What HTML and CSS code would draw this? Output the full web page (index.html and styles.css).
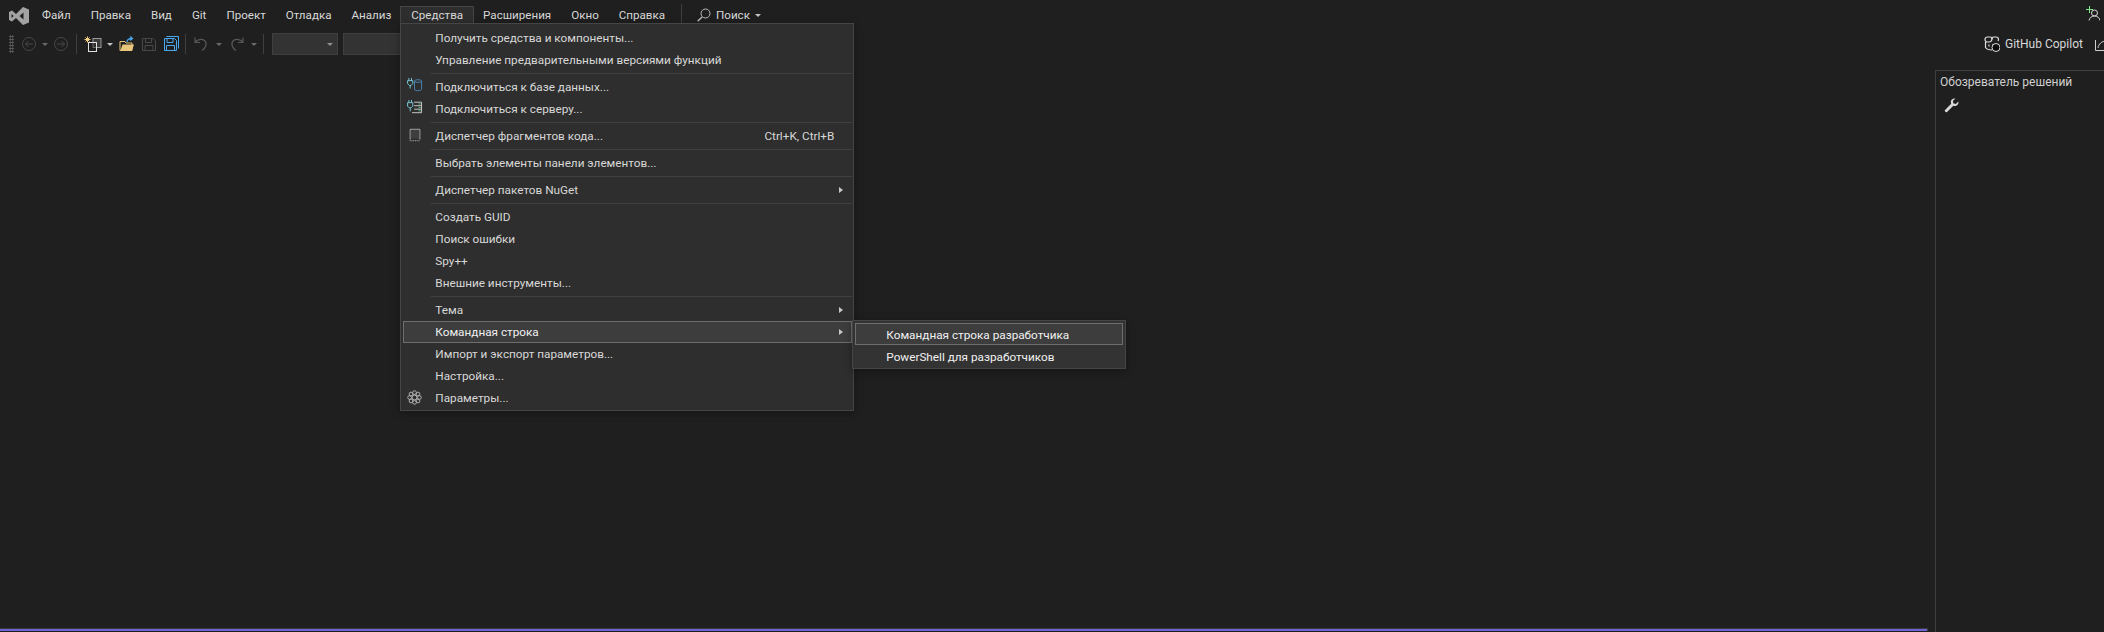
FILE: index.html
```html
<!DOCTYPE html>
<html lang="ru">
<head>
<meta charset="utf-8">
<title>Visual Studio</title>
<link rel="stylesheet" href="styles.css">
</head>
<body>
<div class="app">
  <header class="menubar">
    <svg class="logo" viewBox="0 0 20 18"><path fill-rule="evenodd" fill="#a3a3a3" d="M14 0L20 2.5V15.5L14 18L7 11L3 14.5L0 13V5L3 3.5L7 7ZM2.5 7V11L4.6 9ZM14.5 5.5L10.5 9L14.5 12.5Z"/></svg>
    <nav class="menus">
      <span class="menu-item">Файл</span>
      <span class="menu-item">Правка</span>
      <span class="menu-item">Вид</span>
      <span class="menu-item">Git</span>
      <span class="menu-item">Проект</span>
      <span class="menu-item">Отладка</span>
      <span class="menu-item">Анализ</span>
      <div class="menu-item open">Средства
        <div class="dropdown">
          <div class="row"><span class="label">Получить средства и компоненты...</span></div>
          <div class="row"><span class="label">Управление предварительными версиями функций</span></div>
          <div class="sep"></div>
          <div class="row"><span class="glyph">
            <svg width="16" height="14" viewBox="0 0 18 16" fill="none"><path d="M2 0V3M5 0V3M0.5 3H6.5V6.5L4.5 8.5H2.5L0.5 6.5ZM3.5 8.5V12" stroke="#7fd6e6"/><path d="M8.5 3.5C8.5 1.500 16.500 1.500 16.500 3.500V13C16.500 15 8.500 15 8.500 13ZM8.500 3.500C8.500 5.500 16.500 5.500 16.500 3.500" stroke="#4d8fc2"/></svg>
          </span><span class="label">Подключиться к базе данных...</span></div>
          <div class="row"><span class="glyph">
            <svg width="16" height="14" viewBox="0 0 18 16" fill="none"><path d="M2 0V3M5 0V3M0.5 3H6.500V7L4.500 9H2.500L0.500 7ZM3.500 9V13" stroke="#7fd6e6"/><path d="M8 2.500H16.500V14.500H5.500M8 6.500H16.500M8 10.500H16.500" stroke="#d8d8d8"/><path d="M13 4.500H15.500M13 8.500H15.500M13 12.500H15.500" stroke="#5fd08a"/></svg>
          </span><span class="label">Подключиться к серверу...</span></div>
          <div class="sep"></div>
          <div class="row"><span class="glyph low">
            <svg width="16" height="14" viewBox="0 0 18 16" fill="none"><path d="M3.500 13V1.500H14.500V13" stroke="#d0d0d0"/><rect x="4" y="2" width="10" height="10" fill="#3e3e3e"/><path d="M3 14.500H15" stroke="#d0d0d0" stroke-dasharray="1 1"/></svg>
          </span><span class="label">Диспетчер фрагментов кода...</span><span class="shortcut">Ctrl+K, Ctrl+B</span></div>
          <div class="sep"></div>
          <div class="row"><span class="label">Выбрать элементы панели элементов...</span></div>
          <div class="sep"></div>
          <div class="row"><span class="label">Диспетчер пакетов NuGet</span><span class="arrow"></span></div>
          <div class="sep"></div>
          <div class="row"><span class="label">Создать GUID</span></div>
          <div class="row"><span class="label">Поиск ошибки</span></div>
          <div class="row"><span class="label">Spy++</span></div>
          <div class="row"><span class="label">Внешние инструменты...</span></div>
          <div class="sep"></div>
          <div class="row"><span class="label">Тема</span><span class="arrow"></span></div>
          <div class="row active"><span class="label">Командная строка</span><span class="arrow"></span>
            <div class="submenu">
              <div class="row active sub"><span class="label">Командная строка разработчика</span></div>
              <div class="row sub"><span class="label">PowerShell для разработчиков</span></div>
            </div>
          </div>
          <div class="row"><span class="label">Импорт и экспорт параметров...</span></div>
          <div class="row"><span class="label">Настройка...</span></div>
          <div class="row"><span class="glyph low">
            <svg width="15" height="15" viewBox="0 0 16 16" fill="none" stroke="#b4b4b4"><circle cx="8" cy="8" r="2.500"/><circle cx="8" cy="2.800" r="2"/><circle cx="8" cy="13.200" r="2"/><circle cx="2.800" cy="8" r="2"/><circle cx="13.200" cy="8" r="2"/><circle cx="4.300" cy="4.300" r="2"/><circle cx="11.700" cy="4.300" r="2"/><circle cx="4.300" cy="11.700" r="2"/><circle cx="11.700" cy="11.700" r="2"/></svg>
          </span><span class="label">Параметры...</span></div>
        </div>
      </div>
      <span class="menu-item">Расширения</span>
      <span class="menu-item">Окно</span>
      <span class="menu-item">Справка</span>
    </nav>
    <span class="menu-sep"></span>
    <div class="search">
      <svg width="14" height="14" viewBox="0 0 14 14" fill="none" stroke="#bdbdbd"><circle cx="8.500" cy="5.500" r="4.500"/><path d="M5 9L0.700 13.300" stroke-width="1.400"/></svg>
      <span>Поиск</span>
      <span class="caret light"></span>
    </div>
    <svg class="person" width="14" height="15" viewBox="0 0 14 15" fill="none"><path d="M3.500 0V7M0 3.500H7" stroke="#7ee787"/><circle cx="8.500" cy="7" r="3" stroke="#d8d8d8"/><path d="M3 14.500C3.500 11.500 6 10 8.500 10S13.500 11.500 14 14.500" stroke="#d8d8d8"/></svg>
  </header>

  <div class="toolbar">
    <span class="grip"></span>
    <svg class="tool m7" viewBox="0 0 16 16" fill="none" stroke="#484848"><circle cx="8" cy="8" r="6.500"/><path d="M12 8H4.500M7.500 5L4.500 8L7.500 11"/></svg>
    <span class="caret m5"></span>
    <svg class="tool m5" viewBox="0 0 16 16" fill="none" stroke="#484848"><circle cx="8" cy="8" r="6.500"/><path d="M4 8H11.500M8.500 5L11.500 8L8.500 11"/></svg>
    <span class="tool-sep m7"></span>
    <svg class="tool wide m7" viewBox="0 0 18 16" fill="none"><path d="M3.500 0.500V6.500M0.500 3.500H6.500M1.500 1.500L5.500 5.500M5.500 1.500L1.500 5.500" stroke="#f0d080"/><rect x="9" y="2.500" width="8" height="9" stroke="#9a9a9a" fill="#3a3a3a"/><rect x="4.500" y="6.500" width="8" height="9" stroke="#e2e2e2" fill="#1f1f1f" fill-opacity=".4"/></svg>
    <span class="caret light m5"></span>
    <svg class="tool m6" viewBox="0 0 16 16" fill="none"><path d="M1 14.500V5.500H6L7 7H13V14.500Z" stroke="#e8c77c"/><path d="M1.500 14.500L3.500 8.500H15L13 14.500Z" fill="#e8c77c"/><path d="M8 6C8 3.500 10 2.500 13 2.500M11 0.500L13.500 2.500L11 4.500" stroke="#4aa3e8" stroke-width="1.300"/></svg>
    <svg class="tool m6" viewBox="0 0 16 16" fill="none" stroke="#484848"><path d="M1.500 2.500H12L14.500 5V14.500H1.500Z"/><path d="M4.500 2.500V6.500H10.500V2.500M4 14.500V9.500H12V14.500"/></svg>
    <svg class="tool m6" viewBox="0 0 16 16" fill="none" stroke="#4aa8f0"><path d="M3.500 0.500H15.500V12.500"/><path d="M1.500 2.500H11.500L13.500 4.500V14.500H1.500Z"/><path d="M4 2.500V6.500H10V2.500M3.500 14.500V9.500H11.500V14.500"/></svg>
    <span class="tool-sep m6"></span>
    <svg class="tool m7" viewBox="0 0 16 16" fill="none" stroke="#585858" stroke-width="1.200"><path d="M2 1.500V6.500H7M2 6.500C4 3.500 8.500 2.500 11.500 4.500C14.500 7 13 12 9 14.500"/></svg>
    <span class="caret m7"></span>
    <svg class="tool m7" viewBox="0 0 16 16" fill="none" stroke="#585858" stroke-width="1.200"><path d="M14 1.500V6.500H9M14 6.500C12 3.500 7.500 2.500 4.500 4.500C1.500 7 3 12 7 14.500"/></svg>
    <span class="caret m6"></span>
    <span class="tool-sep m6"></span>
    <div class="combo first"><span class="caret light"></span></div>
    <div class="combo second"></div>
    <div class="copilot">
      <svg width="16" height="16" viewBox="0 0 16 16" fill="none"><path d="M3.500 1H6.500C7.500 1 7.800 2 7.800 3.500C7.800 5 6.500 6 5 6H3.500C1.500 6 1 4.500 1 3.500C1 2 2 1 3.500 1ZM9.500 1H12C13.500 1 14.500 2 14.500 3.500C14.500 4 14.400 4.500 14 5M8.200 3.500C8.200 2 8.500 1 9.500 1M1.500 6V11.500C3 13.500 5.500 14 8 14M5 8.500V10.500M9 8V9" stroke="#dcdcdc" stroke-width="1.200"/><circle cx="12" cy="11.500" r="4" fill="#0c0c0c" stroke="#dcdcdc"/></svg>
      <span>GitHub Copilot</span>
      <svg class="feedback" width="14" height="13" viewBox="0 0 14 13" fill="none" stroke="#cfcfcf"><path d="M0.500 2V12.500H12.500M3 10C3.500 6 7 3 11 3M9 1L11.500 3L9 5"/></svg>
    </div>
  </div>

  <div class="workspace">
    <main class="editor"><div class="statusline"></div></main>
    <aside class="panel">
      <div class="panel-title">Обозреватель решений</div>
      <svg class="wrench" width="15" height="15" viewBox="0 0 15 15"><path fill="#d8d8d8" d="M14.500 3.500L11.700 6L9.200 5.200L9 2.800L11.500 0.500C9 0 6.800 1.500 6.800 4C6.800 4.700 7 5.300 7.200 5.800L0.800 12.300C0.200 13 2 14.800 2.800 14.200L9.300 7.800C12 8.800 15 6.700 14.500 3.500Z"/></svg>
    </aside>
  </div>
</div>
</body>
</html>
```

FILE: styles.css
```css
* { box-sizing: border-box; }
html, body { margin: 0; height: 100%; overflow: hidden; }
body {
  background: #1f1f1f;
  color: #d8d8d8;
  font-family: Roboto, "Open Sans", "Liberation Sans", sans-serif;
  font-size: 12px;
}
.app { height: 100vh; display: flex; flex-direction: column; }

.menubar {
  height: 24px;
  padding: 6px 4px 0 9px;
  display: flex;
  align-items: flex-start;
  flex: none;
  position: relative;
  z-index: 2;
  font-size: 11.6px;
}
.logo { width: 20px; height: 18px; flex: none; margin: 1px 3px 0 0; }
.menus { display: flex; }
.menu-item {
  height: 18px;
  line-height: 17px;
  padding: 0 10px;
  white-space: nowrap;
  position: relative;
  border: 1px solid transparent;
  border-bottom: 0;
  margin: 0 -1px;
}
.menu-item.open {
  background: #2e2e2e;
  border-color: #454545;
  z-index: 1;
}
.menu-sep { width: 1px; height: 19px; margin: -2px 0 0 6px; background: #3f3f3f; }
.search {
  display: flex;
  align-items: center;
  gap: 5px;
  height: 18px;
  margin-left: 15px;
}
.person { margin: 0 0 0 auto; }

.dropdown {
  position: absolute;
  left: -1px;
  top: 16px;
  width: 454px;
  height: 388px;
  padding: 3px 1px 0 2px;
  background: #2e2e2e;
  border: 1px solid #454545;
  box-shadow: 0 2px 8px rgba(0, 0, 0, .35);
  cursor: default;
  font-size: 11.75px;
}
.row {
  height: 22px;
  display: flex;
  align-items: center;
  position: relative;
  padding: 0 8px 0 31px;
  border: 1px solid transparent;
}
.row.active {
  background: #3d3d3d;
  border-color: #6e6e6e;
  color: #f0f0f0;
}
.label { flex: 1; }
.glyph {
  position: absolute;
  left: 3px;
  top: 1px;
  display: flex;
}
.glyph.low { top: 2px; }
.shortcut { margin-right: 9px; }
.arrow {
  width: 0;
  height: 0;
  border-left: 4px solid #c8c8c8;
  border-top: 3.5px solid transparent;
  border-bottom: 3.5px solid transparent;
}
.sep { height: 1px; margin: 2px 0 2px 28px; background: #414141; }

.submenu {
  position: absolute;
  left: 448px;
  top: -2px;
  width: 274px;
  height: 49px;
  padding: 2px 2px 0;
  background: #333333;
  border: 1px solid #454545;
  box-shadow: 0 2px 8px rgba(0, 0, 0, .35);
}
.row.sub { padding-left: 30px; }
.row.sub .label { margin-top: 2px; }

.toolbar {
  flex: none;
  height: 40px;
  padding-left: 9px;
  display: flex;
  align-items: center;
}
.grip {
  width: 5px;
  height: 18px;
  background-image: radial-gradient(#6a6a6a 0.8px, transparent 0.9px);
  background-size: 2.500px 3px;
}
.tool { width: 16px; height: 16px; flex: none; }
.tool.wide { width: 18px; }
.tool-sep { width: 1px; height: 20px; background: #3f3f3f; flex: none; }
.caret {
  width: 0;
  height: 0;
  flex: none;
  border: 3px solid transparent;
  border-bottom: 0;
  border-top-color: #6a6a6a;
}
.caret.light { border-top-color: #c4c4c4; }
.m5 { margin-left: 5px; }
.m6 { margin-left: 6px; }
.m7 { margin-left: 7px; }
.combo {
  height: 22px;
  background: #333333;
  border: 1px solid #3f3f3f;
  display: flex;
  align-items: center;
  justify-content: flex-end;
  padding-right: 4px;
  flex: none;
}
.combo .caret { border-top-color: #909090; }
.combo.first { width: 66px; margin-left: 8px; }
.combo.second { width: 90px; margin-left: 5px; }
.copilot {
  margin-left: auto;
  display: flex;
  align-items: center;
  gap: 5px;
  width: 120px;
  flex: none;
  white-space: nowrap;
  overflow: hidden;
}
.copilot svg { flex: none; }
.feedback { margin-left: 7px; }

.workspace { flex: 1; margin-top: 6px; display: flex; min-height: 0; }
.editor {
  flex: 1;
  display: flex;
  flex-direction: column;
  justify-content: flex-end;
  padding: 0 7px 1px 0;
}
.statusline { height: 3px; background: #6d62d6; border-top: 1px solid #3a3a3a; border-right: 1px solid #3a3a3a; }
.panel {
  width: 169px;
  flex: none;
  border-left: 1px solid #3f3f3f;
  border-top: 1px solid #3f3f3f;
  padding: 3px 0 0 4px;
}
.panel-title { line-height: 16px; white-space: nowrap; color: #cfcfcf; }
.wrench { display: block; margin: 8px 0 0 4px; }
```
